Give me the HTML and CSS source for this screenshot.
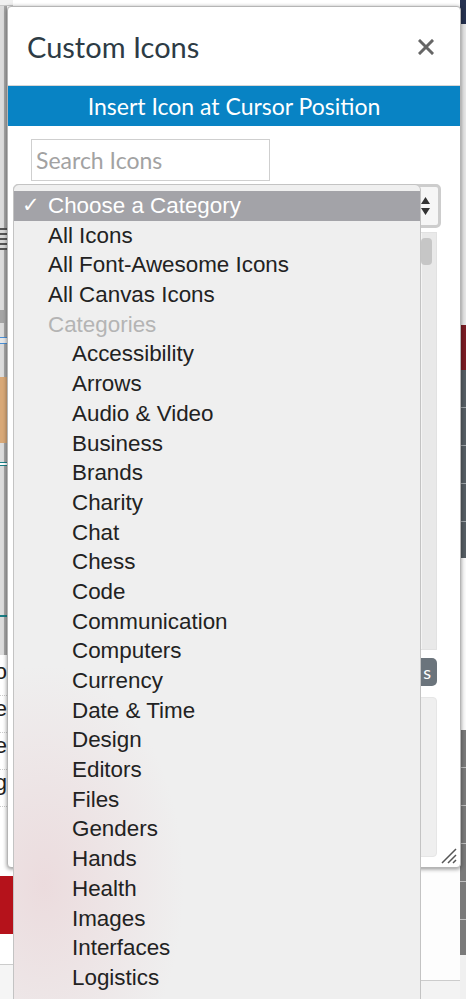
FILE: index.html
```html
<!DOCTYPE html>
<html>
<head>
<meta charset="utf-8">
<link rel="stylesheet" href="styles.css">
</head>
<body>
<div class="screen">
  <div class="page">
    <div class="col-left">
      <div class="lb top"></div>
      <div class="lb" style="height:222px"></div>
      <div class="lb lines" style="height:22px"></div>
      <div class="lb" style="height:60px"></div>
      <div class="lb greyblk" style="height:13px"></div>
      <div class="lb" style="height:14px"></div>
      <div class="lb bluelines" style="height:7px"></div>
      <div class="lb" style="height:33px"></div>
      <div class="lb tan" style="height:66px"></div>
      <div class="lb" style="height:19px"></div>
      <div class="lb teallines" style="height:4px"></div>
      <div class="lb" style="height:149px"></div>
      <div class="lb teal" style="height:2px"></div>
      <div class="lb" style="height:38px"></div>
      <div class="lb frag">
        <div class="fragrow">Do</div>
        <div class="fragrow">ile</div>
        <div class="fragrow">se</div>
        <div class="fragrow">g</div>
      </div>
      <div class="lb red" style="height:58px"></div>
      <div class="lb white"></div>
    </div>
    <div class="col-mid">
      <div class="mid-top"></div>
      <div class="mid-bottom"></div>
    </div>
    <div class="col-right">
      <div class="rb navy" style="height:24px"></div>
      <div class="rb light" style="height:301px"></div>
      <div class="rb darkred" style="height:45px"></div>
      <div class="rb darkgrey" style="height:188px"></div>
      <div class="rb white" style="height:172px"></div>
      <div class="rb grey" style="height:225px"></div>
      <div class="rb pale" style="height:44px"></div>
    </div>
  </div>

  <div class="dialog">
    <div class="dlg-header">
      <h1 class="dlg-title">Custom Icons</h1>
      <svg class="close" width="16" height="16" viewBox="0 0 16 16"><path d="M2 2 L14 14 M14 2 L2 14" stroke="#666" stroke-width="3" stroke-linecap="square"/></svg>
    </div>
    <div class="insert-bar">Insert Icon at Cursor Position</div>
    <div class="dlg-body">
      <div class="search">Search Icons</div>
      <div class="select">
        <span class="sel-text"></span>
        <svg class="sel-arrows" width="9" height="20" viewBox="0 0 9 20"><path d="M4.5 1 L9 8 L0 8 Z M0 12 L9 12 L4.5 19 Z" fill="#333"/></svg>
      </div>
      <div class="icon-panel"><div class="thumb"></div></div>
      <div class="btn-row"><span class="btn">s</span></div>
      <div class="textarea"></div>
    </div>
    <svg class="grip" width="18" height="18" viewBox="0 0 18 18"><path d="M17 3 L3 17 M17 9 L9 17 M17 14 L14 17" stroke="#555" stroke-width="1.5"/></svg>
  </div>

  <div class="dropdown">
    <div class="opt selected"><span class="check">✓</span><span>Choose a Category</span></div>
    <div class="opt">All Icons</div>
    <div class="opt">All Font-Awesome Icons</div>
    <div class="opt">All Canvas Icons</div>
    <div class="opt group">Categories</div>
    <div class="opt sub">Accessibility</div>
    <div class="opt sub">Arrows</div>
    <div class="opt sub">Audio &amp; Video</div>
    <div class="opt sub">Business</div>
    <div class="opt sub">Brands</div>
    <div class="opt sub">Charity</div>
    <div class="opt sub">Chat</div>
    <div class="opt sub">Chess</div>
    <div class="opt sub">Code</div>
    <div class="opt sub">Communication</div>
    <div class="opt sub">Computers</div>
    <div class="opt sub">Currency</div>
    <div class="opt sub">Date &amp; Time</div>
    <div class="opt sub">Design</div>
    <div class="opt sub">Editors</div>
    <div class="opt sub">Files</div>
    <div class="opt sub">Genders</div>
    <div class="opt sub">Hands</div>
    <div class="opt sub">Health</div>
    <div class="opt sub">Images</div>
    <div class="opt sub">Interfaces</div>
    <div class="opt sub">Logistics</div>
  </div>
</div>
</body>
</html>
```
FILE: styles.css
```css
* { box-sizing: border-box; }
html, body { margin: 0; padding: 0; background: #fff; }
.screen {
  position: relative;
  width: 466px;
  height: 999px;
  overflow: hidden;
  font-family: Lato, "Liberation Sans", sans-serif;
}
.page {
  display: flex;
  width: 466px;
  height: 999px;
}
.col-left {
  width: 13px;
  display: flex;
  flex-direction: column;
}
.lb {
  background: linear-gradient(to right, #dcdcdc 0 4px, #a6a6a6 4px 7px, #fff 7px);
}
.lb.top { height: 6px; background: #f0f0f0; border-bottom: 1px solid #c8c8c8; }
.lb.lines { background: repeating-linear-gradient(to bottom, #555 0 2px, #d8d8d8 2px 5px); }
.lb.greyblk { background: #a4a4a4; }
.lb.bluelines { background: linear-gradient(to bottom, #4a8fd6 0 1px, #e8e8e8 1px 6px, #4a8fd6 6px 7px); }
.lb.tan { background: #d8a877; }
.lb.teallines { background: linear-gradient(to bottom, #1b7f86 0 1px, #fff 1px 3px, #1b7f86 3px 4px); }
.lb.teal { background: #1b7f86; }
.lb.frag {
  height: 217px;
  background: #fff;
  padding-top: 4px;
  display: flex;
  flex-direction: column;
}
.fragrow {
  width: 7px;
  height: 37px;
  overflow: hidden;
  direction: rtl;
  white-space: nowrap;
  font-family: "Liberation Sans", sans-serif;
  font-size: 22px;
  line-height: 26px;
  color: #222;
  border-bottom: 1px dotted #ccc;
}
.lb.red { background: #b5121b; margin-top: 4px; }
.lb.white { flex: 1; background: linear-gradient(to bottom, #fff 0 30px, #ccc 30px 31px, #f5f5f5 31px); }

.col-mid {
  flex: 1;
  display: flex;
  flex-direction: column;
}
.mid-top { height: 868px; background: #fff; }
.mid-bottom { flex: 1; background: linear-gradient(to bottom, #fdfdfd 0 112px, #ccc 112px 113px, #f3f3f3 113px); }

.col-right {
  width: 6px;
  display: flex;
  flex-direction: column;
}
.rb.navy { background: #263250; }
.rb.light { background: linear-gradient(to right, #b0b0b0 0 1px, #e6e6e6 1px); }
.rb.darkred { background: #7a1c24; }
.rb.darkgrey {
  background: repeating-linear-gradient(to bottom, #565e64 0 37px, #a0a6aa 37px 38px);
}
.rb.white { background: #fafafa; }
.rb.grey {
  background: repeating-linear-gradient(to bottom, #7a7a7a 0 37px, #c0c0c0 37px 38px);
}
.rb.pale { background: #f0f0f0; }

/* Dialog */
.dialog {
  position: absolute;
  left: 7px;
  top: 6px;
  width: 454px;
  height: 862px;
  background: #fff;
  border: 1px solid #b5b5b5;
  border-radius: 4px;
  box-shadow: 0 1px 4px rgba(0,0,0,0.45);
  display: flex;
  flex-direction: column;
}
.dlg-header {
  height: 79px;
  border-bottom: 1px solid #d6d6d6;
  display: flex;
  align-items: center;
  justify-content: space-between;
  padding: 0 26px 0 19px;
}
.dlg-title {
  margin: 0;
  font-family: Lato, sans-serif;
  font-weight: 400;
  font-size: 29px;
  color: #2d3b45;
}
.close { display: block; margin-top: 2px; }
.insert-bar {
  height: 40px;
  background: #0883c4;
  color: #fff;
  font-family: Lato, sans-serif;
  font-size: 23px;
  display: flex;
  align-items: center;
  justify-content: center;
}
.dlg-body {
  flex: 1;
  display: flex;
  flex-direction: column;
  padding: 13px 0 0 5px;
}
.search {
  margin-left: 18px;
  width: 239px;
  height: 42px;
  border: 1px solid #cfcfcf;
  color: #a2a2a2;
  font-family: Lato, sans-serif;
  font-size: 23px;
  line-height: 40px;
  padding-left: 4px;
}
.select {
  margin-top: 3px;
  width: 428px;
  height: 44px;
  border: 3px solid #cdcdcd;
  border-radius: 5px;
  background: #f6f6f6;
  display: flex;
  align-items: center;
  justify-content: space-between;
  padding: 0 8px 0 10px;
}
.sel-arrows { display: block; }
.icon-panel {
  margin-top: 4px;
  width: 424px;
  height: 418px;
  background: linear-gradient(to right, #f4f4f4 0 408px, #e9e9e9 408px);
  border: 1px solid #e2e2e2;
  display: flex;
  justify-content: flex-end;
  padding: 5px 4px 0 0;
}
.thumb {
  width: 11px;
  height: 27px;
  background: #c6c6c6;
  border-radius: 4px;
}
.btn-row {
  width: 424px;
  margin-top: 8px;
  display: flex;
  justify-content: flex-end;
}
.btn {
  height: 28px;
  background: #6b747c;
  color: #fff;
  border-radius: 5px;
  padding: 0 6px 0 30px;
  font-family: Lato, sans-serif;
  font-size: 18px;
  line-height: 28px;
}
.textarea {
  margin-top: 11px;
  width: 424px;
  height: 160px;
  background: #efefef;
  border: 1px solid #e6e6e6;
  border-radius: 4px;
}
.grip {
  position: absolute;
  right: 3px;
  bottom: 3px;
}

/* Native select popup */
.dropdown {
  position: absolute;
  left: 13px;
  top: 184px;
  width: 408px;
  height: 830px;
  background:
    radial-gradient(ellipse 140px 220px at 30px 700px, rgba(232,200,204,0.5), rgba(239,239,239,0) 100%),
    #efefef;
  border: 1px solid #c3c3c3;
  border-radius: 6px 6px 0 0;
  padding-top: 6px;
  font-family: "Liberation Sans", sans-serif;
  font-size: 22.4px;
  color: #222;
}
.opt {
  height: 29.7px;
  line-height: 29.7px;
  padding-left: 34px;
  white-space: nowrap;
}
.opt.sub { padding-left: 58px; }
.opt.group { color: #b4b4b4; }
.opt.selected {
  background: #a3a3a8;
  color: #fff;
  display: flex;
  padding-left: 8px;
}
.check {
  width: 26px;
  font-family: "DejaVu Sans", sans-serif;
  font-size: 21px;
  font-weight: bold;
}
```
